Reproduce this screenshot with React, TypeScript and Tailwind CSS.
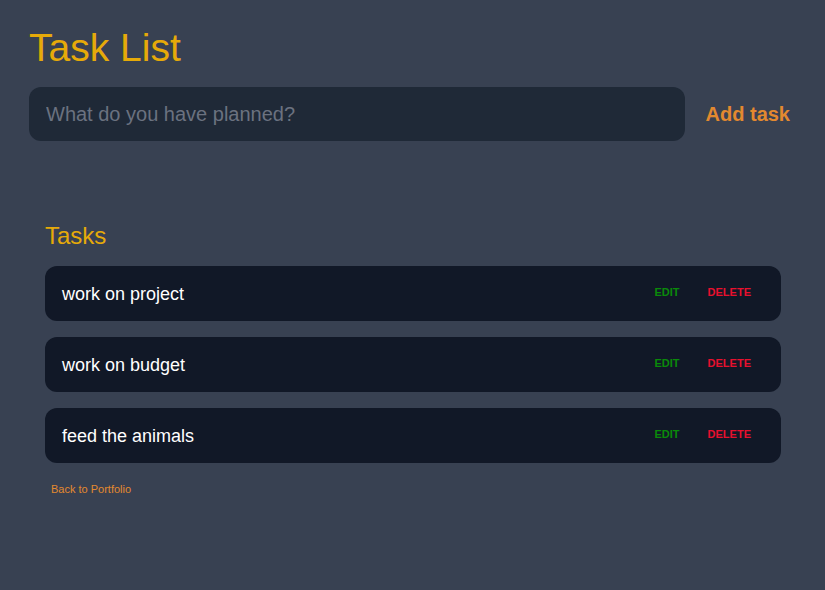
const tasks = ['work on project', 'work on budget', 'feed the animals']

export default function App() {
  return (
    <div className="min-h-screen bg-[#384152] px-[29px] pt-[24px] font-['Liberation_Sans',Arial,sans-serif]">
      {/* Header */}
      <h1 className="text-[39px] leading-[48px] text-[#e6aa09]">Task List</h1>

      {/* New task form */}
      <form className="mt-[15px] flex items-center" onSubmit={(e) => e.preventDefault()}>
        <input
          type="text"
          placeholder="What do you have planned?"
          className="h-[54px] flex-1 rounded-xl bg-[#1f2937] px-[17px] text-[20px] text-white placeholder-[#6b7280] outline-none"
        />
        <button type="submit" className="ml-[21px] mr-[6px] text-[20px] font-bold text-[#e3892f]">
          Add task
        </button>
      </form>

      {/* Tasks */}
      <section className="ml-4 mr-[15px] mt-[80px]">
        <h2 className="text-[24px] leading-[30px] text-[#e6aa09]">Tasks</h2>
        <div className="mt-[15px] flex flex-col gap-4">
          {tasks.map((task) => (
            <div key={task} className="flex h-[55px] items-center rounded-xl bg-[#111827] pl-[17px] pr-[30px]">
              <span className="mt-[2px] flex-1 text-[18px] text-white">{task}</span>
              <button className="-mt-[3px] text-[11px] font-bold text-[#0a8a0a]">EDIT</button>
              <button className="-mt-[3px] ml-[28px] text-[11px] font-bold text-[#e8102e]">DELETE</button>
            </div>
          ))}
        </div>
        <a href="#" className="mt-[18px] ml-[6px] block text-[11px] text-[#e3892f]">
          Back to Portfolio
        </a>
      </section>
    </div>
  )
}
